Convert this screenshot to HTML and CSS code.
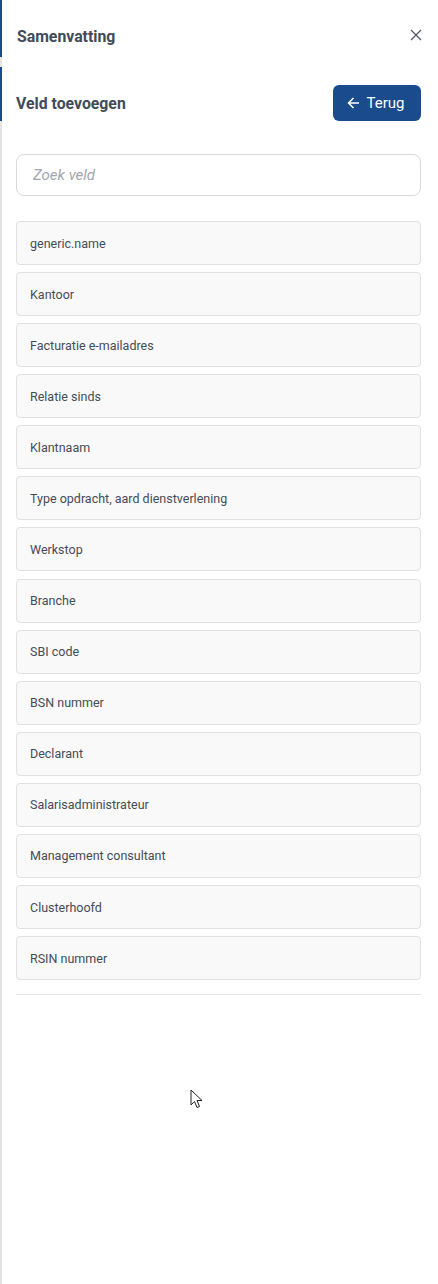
FILE: index.html
```html
<!DOCTYPE html>
<html lang="nl">
<head>
<meta charset="utf-8">
<title>Samenvatting</title>
<link rel="stylesheet" href="styles.css">
</head>
<body>
<div class="panel">
  <header class="header">
    <h1 class="title">Samenvatting</h1>
    <button class="close" aria-label="Sluiten">
      <svg width="12" height="12" viewBox="0 0 12 12"><path d="M1 1L11 11M11 1L1 11" stroke="#555c66" stroke-width="1.4" fill="none"/></svg>
    </button>
  </header>
  <section class="section">
    <div class="section-row">
      <h2 class="subtitle">Veld toevoegen</h2>
      <button class="back">
        <svg width="13" height="12" viewBox="0 0 13 12"><path d="M12 6H1.5M6.5 1L1.5 6L6.5 11" stroke="#fff" stroke-width="1.5" fill="none"/></svg>
        <span>Terug</span>
      </button>
    </div>
    <input class="search" type="text" placeholder="Zoek veld">
    <ul class="list">
      <li class="item">generic.name</li>
      <li class="item">Kantoor</li>
      <li class="item">Facturatie e-mailadres</li>
      <li class="item">Relatie sinds</li>
      <li class="item">Klantnaam</li>
      <li class="item">Type opdracht, aard dienstverlening</li>
      <li class="item">Werkstop</li>
      <li class="item">Branche</li>
      <li class="item">SBI code</li>
      <li class="item">BSN nummer</li>
      <li class="item">Declarant</li>
      <li class="item">Salarisadministrateur</li>
      <li class="item">Management consultant</li>
      <li class="item">Clusterhoofd</li>
      <li class="item">RSIN nummer</li>
    </ul>
    <hr class="divider">
  </section>
  <svg class="cursor" width="14" height="20" viewBox="0 0 14 20"><path d="M1 1V16L4.5 12.5L7 18.5L9.5 17.5L7 11.5H12Z" fill="#fff" stroke="#222" stroke-width="1"/></svg>
</div>
</body>
</html>
```
FILE: styles.css
```css
* { box-sizing: border-box; }
html, body { margin: 0; padding: 0; background: #fff; }
body { font-family: Roboto, "Liberation Sans", Arial, sans-serif; color: #444b55; }
.panel {
  position: relative;
  min-height: 1284px;
  border-left: 2px solid #e4e4e4;
}
.header {
  height: 57px;
  margin-left: -2px;
  border-left: 2px solid #1a4b8c;
  display: flex;
  align-items: flex-start;
  justify-content: space-between;
  padding: 28px 15px 0 15px;
}
.title {
  margin: 0;
  font-size: 15.8px;
  line-height: 18px;
  font-weight: 700;
  color: #414b5a;
}
.close {
  border: 0;
  background: none;
  padding: 0;
  width: 14px;
  height: 14px;
  display: flex;
  align-items: center;
  justify-content: center;
  cursor: pointer;
}
.section {
  margin-top: 10px;
  padding: 0 17px 0 14px;
}
.section-row {
  margin-left: -16px;
  border-left: 2px solid #1a4b8c;
  padding: 18px 0 0 14px;
  display: flex;
  align-items: center;
  justify-content: space-between;
  box-sizing: content-box;
  height: 36px;
}
.subtitle {
  margin: 0;
  font-size: 15.8px;
  font-weight: 700;
  color: #414b5a;
}
.back {
  height: 36px;
  width: 88px;
  border: 0;
  border-radius: 6px;
  background: #1a4b8c;
  color: #fff;
  font-family: Roboto, "Liberation Sans", Arial, sans-serif;
  font-size: 15px;
  display: flex;
  align-items: center;
  justify-content: center;
  gap: 7px;
  padding: 0 3px 0 0;
  cursor: pointer;
}
.search {
  display: block;
  width: 100%;
  height: 42px;
  margin-top: 33px;
  border: 1px solid #d6d9de;
  border-radius: 8px;
  padding: 0 16px;
  font-family: Roboto, "Liberation Sans", Arial, sans-serif;
  font-size: 15px;
  font-style: italic;
  color: #444b55;
  outline: none;
}
.search::placeholder { color: #a3a6ab; font-style: italic; }
.list {
  list-style: none;
  margin: 25px 0 0;
  padding: 0;
  display: flex;
  flex-direction: column;
  gap: 7.08px;
}
.item {
  height: 44px;
  display: flex;
  align-items: center;
  padding: 0 13px;
  background: #f9f9f9;
  border: 1px solid #e1e1e1;
  border-radius: 4px;
  font-size: 12.5px;
  color: #464c56;
}
.divider {
  margin: 14px 0 0;
  border: 0;
  border-top: 1px solid #e4e4e4;
}
.cursor {
  position: absolute;
  left: 188px;
  top: 1089px;
}
```
